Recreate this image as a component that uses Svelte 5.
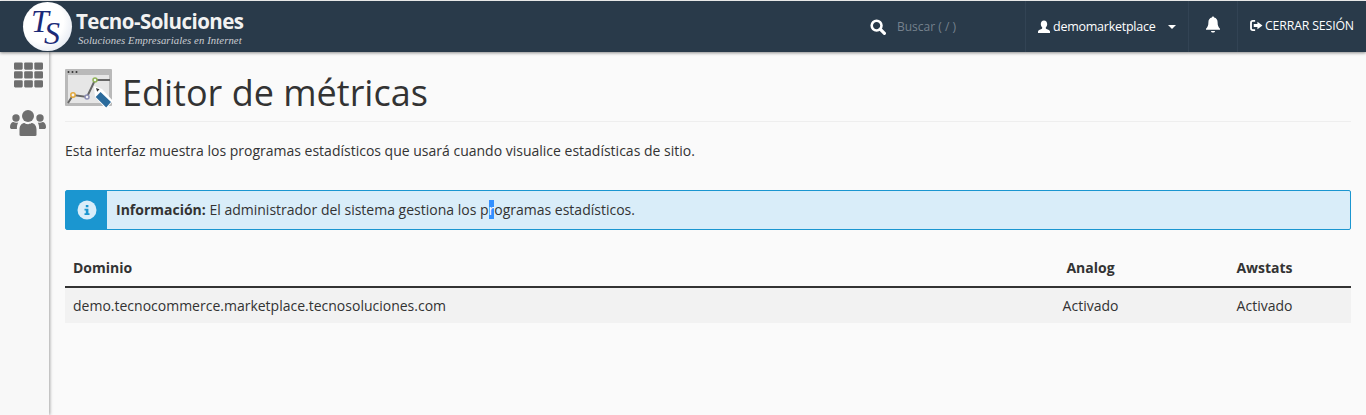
<script>
	const rows = [
		{ domain: 'demo.tecnocommerce.marketplace.tecnosoluciones.com', analog: 'Activado', awstats: 'Activado' }
	];
</script>

<header class="topbar">
	<div class="logo">
		<div class="logo-badge"><span class="t">T</span><span class="s">S</span></div>
		<div class="logo-text">
			<div class="logo-name">Tecno-Soluciones</div>
			<div class="logo-sub">Soluciones Empresariales en Internet</div>
		</div>
	</div>
	<div class="top-right">
		<div class="search">
			<svg class="search-icon" viewBox="0 0 16 16" width="16" height="16">
				<circle cx="6.6" cy="6.6" r="4.9" fill="none" stroke="#fff" stroke-width="2.6" />
				<path d="M10.2 10.2l4.2 4.2" stroke="#fff" stroke-width="3.2" stroke-linecap="round" />
			</svg>
			<span class="search-text">Buscar ( / )</span>
		</div>
		<div class="user cell">
			<svg viewBox="0 0 14 14" width="14" height="14">
				<path fill="#fff" d="M7 .5c2 0 3.2 1.500 3.200 3.600 0 1.500-.6 2.800-1.400 3.500-.2.700 0 1.100.7 1.400 1.700.7 3.500 1.200 3.500 2.500v1.500H1V11.500c0-1.300 1.800-1.800 3.500-2.500.7-.3.900-.7.700-1.400C4.400 6.900 3.800 5.600 3.800 4.100 3.800 2 5 .5 7 .5z" />
			</svg>
			<span class="username">demomarketplace</span>
			<span class="caret"></span>
		</div>
		<div class="bell cell">
			<svg viewBox="0 0 16 16" width="16" height="17">
				<path fill="#fff" d="M8 0c.7 0 1.100.5 1.100 1.100 2.300.5 3.500 2.300 3.500 4.700 0 3.200.8 4.900 2.400 6.400v1H1v-1c1.600-1.500 2.400-3.200 2.400-6.400 0-2.400 1.200-4.200 3.500-4.700C6.900.5 7.300 0 8 0zM6 14.500h4c0 1-.9 1.500-2 1.500s-2-.5-2-1.500z" />
			</svg>
		</div>
		<div class="logout cell">
			<svg viewBox="0 0 14 12" width="13" height="11">
				<path fill="#fff" d="M5.500 0v2H3a1 1 0 0 0-1 1v6a1 1 0 0 0 1 1h2.500v2H3a3 3 0 0 1-3-3V3a3 3 0 0 1 3-3z" />
				<path fill="#fff" d="M8 2l5.500 4L8 10V7.600H4V4.400h4z" />
			</svg>
			<span class="logout-text">CERRAR SESIÓN</span>
		</div>
	</div>
</header>

<div class="layout">
	<nav class="sidebar">
		<svg viewBox="0 0 30 26" width="29" height="26">
			<g fill="#6f6f6f">
				<rect x="0" y="0" width="9" height="7.500" rx="1.200" />
				<rect x="10.500" y="0" width="9" height="7.500" rx="1.200" />
				<rect x="21" y="0" width="9" height="7.500" rx="1.200" />
				<rect x="0" y="9.200" width="9" height="7.500" rx="1.200" />
				<rect x="10.500" y="9.200" width="9" height="7.500" rx="1.200" />
				<rect x="21" y="9.200" width="9" height="7.500" rx="1.200" />
				<rect x="0" y="18.400" width="9" height="7.500" rx="1.200" />
				<rect x="10.500" y="18.400" width="9" height="7.500" rx="1.200" />
				<rect x="21" y="18.400" width="9" height="7.500" rx="1.200" />
			</g>
		</svg>
		<svg class="users" viewBox="0 0 36 26" width="36" height="26">
			<g fill="#6f6f6f">
				<circle cx="18" cy="6" r="6" />
				<path d="M9.500 25v-5.500c0-4.500 3-6.500 5-6.500 1 .8 2 1.200 3.500 1.200s2.500-.4 3.500-1.200c2 0 5 2 5 6.500V25c0 .6-1 1-2 1H11.500c-1 0-2-.4-2-1z" />
				<circle cx="6" cy="8" r="3.700" />
				<circle cx="30" cy="8" r="3.700" />
				<path d="M0 17c0-3 1.500-5 3.500-5 1 .7 3 1 4.700.4-.8 1.600-1.300 3.300-1.300 5.600v1H2c-1.200 0-2-.6-2-2z" />
				<path d="M36 17c0-3-1.500-5-3.500-5-1 .7-3 1-4.700.4.800 1.600 1.300 3.300 1.300 5.600v1H34c1.200 0 2-.6 2-2z" />
			</g>
		</svg>
	</nav>

	<main class="content">
		<div class="page-header">
			<svg class="page-icon" viewBox="0 0 48 40" width="48" height="40">
				<rect x="0" y="0" width="47" height="37" rx="1" fill="#b9b9b9" />
				<rect x="3" y="6" width="41" height="28" fill="#e6e6e6" />
				<circle cx="3.500" cy="3" r="1" fill="#333" />
				<circle cx="7.500" cy="3" r="1" fill="#333" />
				<circle cx="11.500" cy="3" r="1" fill="#333" />
				<path d="M3 34l5-8 14 2 8-17h15" fill="none" stroke="#666" stroke-width="2" />
				<circle cx="8" cy="26" r="2.200" fill="#f4f4f4" stroke="#e3a83a" stroke-width="1.500" />
				<circle cx="22" cy="28" r="2" fill="#f4f4f4" stroke="#8d8fb5" stroke-width="1.500" />
				<circle cx="30" cy="11" r="2" fill="#f4f4f4" stroke="#8fb356" stroke-width="1.500" />
				<path d="M29 17l8 3 11 12-7 8-11-12z" fill="#fff" />
				<path d="M31 19l3.500 1.300-2.300 2.400z" fill="#333" />
				<path d="M35.500 23l10.500 10-4.800 5.500-10.500-10.500z" fill="#2b6b9c" />
			</svg>
			<h1>Editor de métricas</h1>
		</div>

		<p class="description">Esta interfaz muestra los programas estadísticos que usará cuando visualice estadísticas de sitio.</p>

		<div class="alert">
			<div class="alert-icon">
				<svg viewBox="0 0 20 20" width="20" height="20">
					<circle cx="10" cy="10" r="9.500" fill="#d9edf9" />
					<path fill="#1b96d0" d="M8.800 5h2.600v2.200H8.800zM7.500 8.700h3.900v4.600h1.100v1.700H7.500v-1.700h1.300v-2.900H7.500z" />
				</svg>
			</div>
			<div class="alert-body"><strong>Información:</strong> El administrador del sistema gestiona los p<span class="selected">r</span>ogramas estadísticos.</div>
		</div>

		<table class="stats">
			<thead>
				<tr>
					<th class="domain">Dominio</th>
					<th>Analog</th>
					<th>Awstats</th>
				</tr>
			</thead>
			<tbody>
				{#each rows as row}
					<tr>
						<td class="domain">{row.domain}</td>
						<td>{row.analog}</td>
						<td>{row.awstats}</td>
					</tr>
				{/each}
			</tbody>
		</table>
	</main>
</div>

<style>
	:global(body) {
		margin: 0;
		background: #fafafa;
		font-family: "Open Sans", sans-serif;
		color: #333;
		overflow: hidden;
	}

	.topbar {
		display: flex;
		justify-content: space-between;
		height: 51px;
		margin-top: 1px;
		background: #293a4a;
		box-shadow: 0 1px 3px rgba(0, 0, 0, 0.45);
		position: relative;
		z-index: 2;
	}

	.logo {
		display: flex;
		align-items: center;
		padding-left: 23px;
		gap: 4px;
	}

	.logo-badge {
		width: 49px;
		height: 49px;
		border-radius: 50%;
		background: radial-gradient(circle at 40% 40%, #fff 50%, #d4dbe8);
		color: #1b2a78;
		font-family: "Liberation Serif", serif;
		font-style: italic;
		font-size: 32px;
		line-height: 1;
		position: relative;
	}

	.t {
		position: absolute;
		left: 8px;
		top: 3px;
	}

	.s {
		position: absolute;
		left: 21px;
		top: 15px;
	}

	.logo-text {
		display: flex;
		flex-direction: column;
		padding-top: 2px;
	}

	.logo-name {
		color: #f2f2f2;
		font-size: 20.500px;
		font-weight: 700;
		line-height: 26px;
		letter-spacing: -0.55px;
	}

	.logo-sub {
		color: #c9cdd2;
		font-family: "Liberation Serif", serif;
		font-style: italic;
		font-size: 10.700px;
		line-height: 13px;
		padding-left: 2px;
		letter-spacing: 0.1px;
	}

	.top-right {
		display: flex;
		align-items: stretch;
		color: #fff;
		font-size: 12px;
	}

	.search {
		display: flex;
		align-items: center;
		width: 155px;
		gap: 11px;
	}

	.search-text {
		color: #75818d;
		font-size: 12px;
	}

	.cell {
		display: flex;
		align-items: center;
		border-left: 1px solid #324354;
	}

	.user {
		width: 163px;
		padding-left: 11px;
		box-sizing: border-box;
		gap: 2px;
	}

	.username {
		font-size: 12.500px;
		letter-spacing: -0.25px;
	}

	.caret {
		width: 0;
		height: 0;
		margin-left: 11px;
		border-left: 4px solid transparent;
		border-right: 4px solid transparent;
		border-top: 4px solid #fff;
	}

	.bell {
		width: 49px;
		box-sizing: border-box;
		justify-content: center;
		padding-bottom: 4px;
	}

	.logout {
		width: 129px;
		box-sizing: border-box;
		padding-left: 12px;
		gap: 2px;
		padding-bottom: 3px;
	}

	.logout-text {
		font-size: 12.300px;
		letter-spacing: -0.15px;
	}

	.layout {
		display: flex;
		height: 363px;
	}

	.sidebar {
		width: 49px;
		background: #f8f8f8;
		box-shadow: 1px 0 3px rgba(0, 0, 0, 0.35);
		display: flex;
		flex-direction: column;
		align-items: center;
		gap: 22px;
		padding-top: 10px;
		box-sizing: border-box;
		padding-left: 7px;
	}

	.users {
		width: 36px;
	}

	.content {
		flex: 1;
		padding: 0 15px 0 16px;
	}

	.page-header {
		display: flex;
		align-items: flex-start;
		gap: 10px;
		height: 70px;
		padding-top: 17px;
		border-bottom: 1px solid #eee;
		box-sizing: border-box;
	}

	h1 {
		margin: 4px 0 0 -1px;
		font-size: 36px;
		font-weight: 400;
		line-height: 40px;
		color: #333;
	}

	.description {
		margin: 19px 0 0;
		font-size: 14px;
		line-height: 20px;
	}

	.alert {
		display: flex;
		margin-top: 29px;
		height: 40px;
		border: 1px solid #1b96d0;
		border-radius: 2px;
		background: #d9edf9;
		box-sizing: border-box;
	}

	.alert-icon {
		width: 41px;
		background: #1b96d0;
		display: flex;
		align-items: center;
		justify-content: center;
	}

	.alert-body {
		padding-left: 9px;
		font-size: 14px;
		line-height: 38px;
	}

	.selected {
		background: #3390ff;
		color: #fff;
	}

	.stats {
		width: 100%;
		margin-top: 20px;
		border-collapse: collapse;
		font-size: 14px;
	}

	th {
		height: 34px;
		font-weight: 700;
		text-align: center;
		border-bottom: 2px solid #333;
		width: 173px;
		padding: 0 0 2px;
	}

	th:nth-child(2),
	td:nth-child(2) {
		width: 175px;
	}

	td {
		height: 34px;
		text-align: center;
		background: #f2f2f2;
		padding: 0 0 1px;
	}

	.domain {
		text-align: left;
		padding-left: 8px;
		width: auto;
	}
</style>
